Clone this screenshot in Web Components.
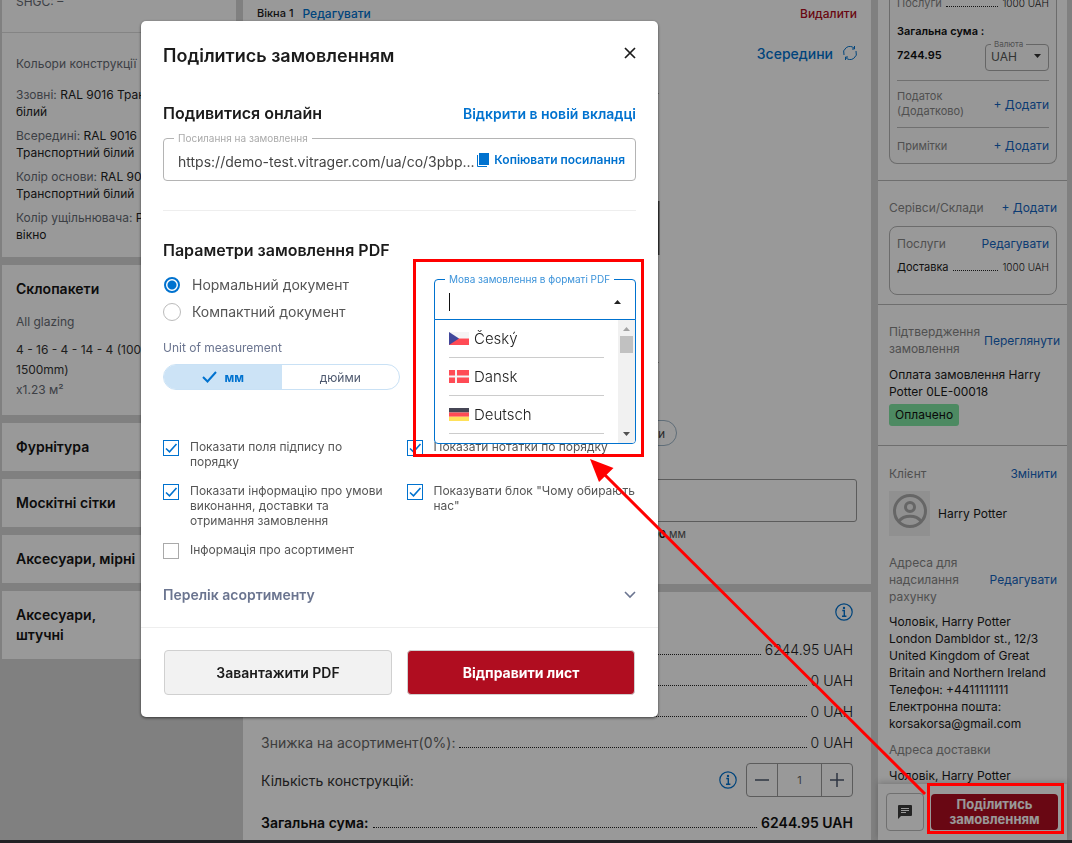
<!DOCTYPE html>
<html lang="uk">
<head>
<meta charset="utf-8">
<title>Замовлення</title>
<style>
html,body{margin:0;height:100%}
body{font-family:Inter,"Noto Sans",sans-serif;font-size:12px;color:#1c1c1c;background:#d5d5d5;overflow:hidden}
</style>
</head>
<body>
<order-page></order-page>
<script>
function define(name, html, setup) {
  const t = document.createElement('template');
  t.innerHTML = '<style>:host{display:block}*{box-sizing:border-box}a{text-decoration:none;color:var(--link,#0072cf)}button,input,select{font:inherit;color:inherit}</style>' + html;
  customElements.define(name, class extends HTMLElement {
    constructor() {
      super();
      this.attachShadow({ mode: 'open' }).appendChild(t.content.cloneNode(true));
    }
    connectedCallback() { if (setup) setup(this, this.shadowRoot); }
  });
}

/* ---------- small pieces ---------- */
define('info-icon', `
<style>:host{width:18px;height:18px}svg{display:block}</style>
<svg width="18" height="18" viewBox="0 0 18 18" fill="none" stroke="#0072cf"><circle cx="9" cy="9" r="8.2" stroke-width="1.2"/><path d="M7.3 7.5h2v5.6M7 13.3h4.4" stroke-width="1.4"/><circle cx="9" cy="4.9" r="1.2" fill="#0072cf" stroke="none"/></svg>`);

define('dotted-row', `
<style>
:host{display:flex;align-items:baseline;gap:4px}
i{flex:1;border-bottom:1px dotted #222;min-width:8px}
</style><slot name="label"></slot><i></i><slot></slot>`);

define('side-card', `
<style>:host{background:#fff;padding:14px}h3{margin:0;font-size:14px;line-height:20px;font-weight:600;color:#151515}</style>
<h3><slot name="title"></slot></h3><slot></slot>`);

define('spec-item', `
<style>:host{line-height:17px;margin-bottom:7px;font-size:12px;white-space:nowrap;color:#222}span{color:#666b74}</style>
<span><slot name="name"></slot></span> <slot></slot>`);

define('add-link', `
<style>a{font-size:12px;line-height:17px;white-space:nowrap}</style><a href="#"><slot></slot></a>`);

define('radio-option', `
<style>
label{display:flex;align-items:center;gap:11px;height:27px;font-size:14px;color:#555}
input{appearance:none;margin:0;width:18px;height:18px;border:1px solid #bbb;border-radius:50%}
input:checked{width:16px;height:16px;margin:1px;border:2px solid #0072cf;background:radial-gradient(#0072cf 4px,#fff 5px)}
</style>
<label><input type="radio"><span><slot></slot></span></label>`, (el, r) => {
  r.querySelector('input').checked = el.hasAttribute('checked');
});

define('check-option', `
<style>
label{display:flex;align-items:flex-start;gap:11px;font-size:12px;line-height:15px;color:#555;white-space:nowrap}
input{appearance:none;flex:none;margin:1px 0 -2px;width:16px;height:16px;border:1px solid #aaa;background:#fff}
input:checked{border:1px solid #0072cf;background:url('data:image/svg+xml,<svg xmlns="http://www.w3.org/2000/svg" viewBox="0 0 14 14"><path d="M2 7.5l3.5 3.3L12.5 3" fill="none" stroke="%230072cf" stroke-width="1.6"/></svg>')}
</style>
<label><input type="checkbox"><span><slot></slot></span></label>`, (el, r) => {
  r.querySelector('input').checked = el.hasAttribute('checked');
});

/* ---------- left column ---------- */
define('spec-column', `
<style>
:host{display:flex;flex-direction:column;gap:8px;min-width:0}
.first{background:#fff;height:257px;overflow:hidden}
.shgc{display:flow-root;height:33px;border-bottom:1px solid #ddd;padding-left:14px;color:#666b74;line-height:17px}
.shgc span{display:block;margin-top:-7px}
.colors{padding:22px 14px}
.colors p{margin:0 0 13px;line-height:18px;color:#666b74}
.glass{padding-bottom:1px}
.glass p{margin:13px 0 8px;line-height:20px;color:#666b74}
.glass div{line-height:20px;color:#333}
.glass div span{color:#666b74}
</style>
<section class="first">
  <div class="shgc"><span>SHGC: –</span></div>
  <div class="colors">
    <p>Кольори конструкції</p>
    <spec-item><span slot="name">Ззовні:</span>RAL 9016 Транспортний<br>білий</spec-item>
    <spec-item><span slot="name">Всередині:</span>RAL 9016<br>Транспортний білий</spec-item>
    <spec-item><span slot="name">Колір основи:</span>RAL 9016<br>Транспортний білий</spec-item>
    <spec-item><span slot="name">Колір ущільнювача:</span>P<br>вікно</spec-item>
  </div>
</section>
<side-card><span slot="title">Склопакети</span>
  <div class="glass"><p>All glazing</p><div>4 - 16 - 4 - 14 - 4 (1000 x<br>1500mm)<br><span>x1.23 м²</span></div></div>
</side-card>
<side-card><span slot="title">Фурнітура</span></side-card>
<side-card><span slot="title">Москітні сітки</span></side-card>
<side-card><span slot="title">Аксесуари, мірні</span></side-card>
<side-card><span slot="title">Аксесуари,<br>штучні</span></side-card>`);

/* ---------- middle column ---------- */
define('construction-column', `
<style>
:host{display:flex;flex-direction:column;gap:8px;min-width:0}
.view{background:#fff;height:584px;padding:3px 14px 0;display:flex;flex-direction:column}
header{display:flex;align-items:center;gap:9px;height:20px;font-size:11px}
header b,header a{font-weight:500}
header a{font-size:12px}
header .del{margin-left:auto;color:#b00d20}
.side{display:flex;justify-content:flex-end;align-items:center;gap:10px;margin-top:20px;height:20px;font-size:14px;font-weight:500}
.side svg{display:block}
.stage{display:flex;justify-content:flex-end;margin:27px 197px 0 0;height:300px}
.pill{align-self:flex-end;margin:30px 180px 0 0;width:120px;height:26px;padding:0 11px;border:1px solid #9fb6c8;border-radius:13px;background:#fff;text-align:right;font-size:12px;color:#444}
input{display:block;width:100%;height:43px;margin-top:33px;border:1px solid #999;border-radius:3px;background:#fff}
.dim{text-align:right;margin:5px 171px 0 0;font-size:11px;line-height:15px;color:#555}
.dim b{color:#111;font-weight:600}
.sum{background:#fff;flex:1;padding:11px 18px 0;font-size:14px;color:#333}
.sum info-icon{margin-left:auto}
.sum dotted-row{height:31px;line-height:31px}
.rows{margin-top:13px}
.rows span{color:#666}
.rows b{font-weight:300;color:#222}
.qty{display:flex;align-items:center;gap:9px;height:34px;margin-top:5px}
.step{display:flex;height:34px;width:107px;border:1px solid #999;border-radius:4px}
.step button{width:30px;padding:0;border:0;background:none;display:grid;place-items:center}
.step input{flex:1;min-width:0;margin:0;height:32px;border:solid #999;border-width:0 1px;border-radius:0;text-align:center;font-size:11px;color:#666}
.sum .total{font-weight:600;color:#111;margin-top:10px}
</style>
<section class="view">
  <header><b>Вікна 1</b><a href="#">Редагувати</a><a href="#" class="del">Видалити</a></header>
  <div class="side"><a href="#">Зсередини</a>
    <svg width="14" height="14" viewBox="0 0 14 14" fill="none" stroke="#0072cf"><path d="M1 9A6.2 6.2 0 0 1 11 2.2M13 5A6.2 6.2 0 0 1 3 11.8"/><path d="M11.5 0v3H9M2.5 14v-3H5"/></svg></div>
  <div class="stage"><svg width="4" height="300" stroke="#555"><path d="M0 3.500h3M0 272.500h3" stroke="#aaa"/><path d="M2.500 111v54" stroke-width="2"/></svg></div>
  <button class="pill" type="button">и</button>
  <input aria-label="Примітка">
  <div class="dim"><b>1000</b> мм</div>
</section>
<section class="sum">
  <info-icon></info-icon>
  <div class="rows">
    <dotted-row><b>6244.95 UAH</b></dotted-row>
    <dotted-row><b>0 UAH</b></dotted-row>
    <dotted-row><b>0 UAH</b></dotted-row>
    <dotted-row><span slot="label">Знижка на асортимент(0%):</span><b>0 UAH</b></dotted-row>
  </div>
  <div class="qty"><label for="q">Кількість конструкцій:</label><info-icon></info-icon>
    <div class="step"><button type="button" aria-label="Менше"><svg width="16" height="16" stroke="#4d586e" stroke-width="1.500"><path d="M1 8h14"/></svg></button><input id="q" value="1"><button type="button" aria-label="Більше"><svg width="16" height="16" stroke="#4d586e" stroke-width="1.500"><path d="M1 8h14M8 1v14"/></svg></button></div>
  </div>
  <dotted-row class="total"><span slot="label">Загальна сума:</span><span>6244.95 UAH</span></dotted-row>
</section>`);

/* ---------- right column ---------- */
define('order-column', `
<style>
:host{display:flex;flex-direction:column;background:#fff;min-width:0;font-size:12px;line-height:17px;--link:#1565c0}
.scroll{flex:1;min-height:0;overflow:hidden}
section{padding:0 10px 0 11px;border-bottom:1px solid #b8b8b8}
section:last-child{border:0}
.box{border:1px solid #b4b4b4;border-radius:8px;padding:0 7px}
.split{display:flex;justify-content:space-between;align-items:center}
.g{color:#858585}
.one{height:181px}
.one .box{display:flow-root;border-top:0;border-radius:0 0 8px 8px;height:164px;background:#fcfcfc}
.one dotted-row,.two dotted-row{font-size:11px}
.one dotted-row{margin-top:-5px;height:17px}
.p{font-size:10px;font-weight:300;color:#222}
.one .strong{font-size:11px;font-weight:600;color:#111}
.one .head{margin-top:11px}
.cur{display:flex;justify-content:space-between;align-items:center;height:41px;border-bottom:1px solid #bbb;padding-bottom:9px}
fieldset{margin:0;padding:0 5px;border:1px solid #aaa;border-radius:4px;width:64px;height:31px}
legend{font-size:8px;line-height:8px;padding:0 3px;margin:0;color:#888}
select{appearance:none;border:0;width:100%;height:17px;padding:0;color:#555;font-size:12px;background:none}
.sel{position:relative}
.sel svg{position:absolute;right:1px;top:6px}
.tax{height:47px;border-bottom:1px solid #bbb;font-size:11px;line-height:15px}
.notes{height:36px;font-size:11px}
.two{height:124px;padding-top:18px}
.two .box{height:69px;margin-top:10px;padding-top:8px}
.two dotted-row{margin-top:7px}
.three{height:141px;padding-top:18px}
.three a{margin-right:-3px}
.three p{margin:9px 0 4px;color:#1a1a1a}
.badge{display:inline-block;background:#80e6a3;border-radius:3px;padding:0 6px;line-height:22px;color:#111}
.four{padding-top:19px}
.user{display:flex;align-items:center;gap:8px;margin:9px 0 18px;color:#1a1a1a}
.user span{width:41px;height:45px;background:#f0f0f0;display:grid;place-items:center;padding-bottom:5px}
.addr{color:#1a1a1a;margin-top:8px;white-space:nowrap}
.ship{margin-top:9px}
footer{display:flex;gap:7px;padding:9px 9px 9px 8px;height:56px;box-shadow:0 -2px 6px #0003;background:#fff}
footer button{border-radius:4px;padding:0;display:grid;place-items:center}
.chat{width:38px;border:1px solid #bbb;background:#fff}
.share{flex:1;margin:1px 0;border:0;background:#b00d20;color:#fff;font-size:13px;font-weight:700;line-height:15px}
</style>
<div class="scroll">
  <section class="one"><div class="box">
    <dotted-row><span slot="label" class="g">Послуги</span><span class="p">1000 UAH</span></dotted-row>
    <div class="strong head">Загальна сума :</div>
    <div class="cur"><span class="strong">7244.95</span>
      <fieldset><legend>Валюта</legend><div class="sel"><select aria-label="Валюта"><option>UAH</option></select><svg width="8" height="5"><path d="M0 0h7l-3.500 4z" fill="#333"/></svg></div></fieldset></div>
    <div class="split tax"><span class="g">Податок<br>(Додатково)</span><add-link>+ Додати</add-link></div>
    <div class="split notes"><span class="g">Примітки</span><add-link>+ Додати</add-link></div>
  </div></section>
  <section class="two">
    <div class="split"><span class="g">Серівси/Склади</span><add-link>+ Додати</add-link></div>
    <div class="box"><div class="split"><span class="g">Послуги</span><a href="#">Редагувати</a></div>
      <dotted-row><span slot="label">Доставка</span><span class="p">1000 UAH</span></dotted-row></div>
  </section>
  <section class="three">
    <div class="split"><span class="g">Підтвердження<br>замовлення</span><a href="#">Переглянути</a></div>
    <p>Оплата замовлення Harry<br>Potter 0LE-00018</p><span class="badge">Оплачено</span>
  </section>
  <section class="four">
    <div class="split"><span class="g">Клієнт</span><a href="#">Змінити</a></div>
    <div class="user"><span><svg width="34" height="34" viewBox="0 0 34 34" fill="none" stroke="#aaa" stroke-width="3"><circle cx="17" cy="17" r="15.500"/><circle cx="17" cy="13" r="4.500"/><path d="M6 27c5-6.500 17-6.500 22 0"/></svg></span>Harry Potter</div>
    <div class="split"><span class="g">Адреса для<br>надсилання<br>рахунку</span><a href="#">Редагувати</a></div>
    <div class="addr">Чоловік, Harry Potter<br>London Dambldor st., 12/3<br>United Kingdom of Great<br>Britain and Northern Ireland<br>Телефон: +4411111111<br>Електронна пошта:<br>korsakorsa@gmail.com</div>
    <div class="g ship">Адреса доставки</div>
    <div class="addr ship">Чоловік, Harry Potter</div>
  </section>
</div>
<footer>
  <button class="chat" type="button" aria-label="Чат"><svg width="14" height="14" viewBox="0 0 14 14"><path d="M1 0h12q1 0 1 1v9q0 1-1 1H3l-3 3V1q0-1 1-1z" fill="#3c3c3c"/><path d="M3 3.500h8M3 5.500h8M3 7.500h5" stroke="#fff"/></svg></button>
  <button class="share" type="button">Поділитись<br>замовленням</button>
</footer>`);

/* ---------- language combo box ---------- */
define('language-option', `
<style>
:host{display:flex;align-items:center;gap:5px;height:38px;border-bottom:1px solid #ccc;font-size:15px;font-weight:300;color:#222}
svg{display:block}
</style><svg width="20" height="13" viewBox="0 0 20 13"></svg><span><slot></slot></span>`, (el, r) => {
  const flags = {
    cs: '<path fill="#f5f5f5" d="M0 0h20v6.500H0z"/><path fill="#ff4b55" d="M0 6.500h20V13H0z"/><path fill="#41479b" d="M0 0l10 6.500L0 13z"/>',
    da: '<path fill="#ff4b55" d="M0 0h20v13H0z"/><path fill="#f5f5f5" d="M6 0h2v13H6zM0 5.500h20v2H0z"/>',
    de: '<path fill="#464655" d="M0 0h20v4.400H0z"/><path fill="#ff4b55" d="M0 4.400h20v4.300H0z"/><path fill="#ffe15a" d="M0 8.700h20V13H0z"/>'
  };
  r.querySelector('svg').innerHTML = flags[el.getAttribute('flag')];
});

define('language-combo', `
<style>
:host{position:relative}
fieldset{margin:0;min-width:0;padding:0 13px 0 14px;border:1px solid #0072cf;border-radius:4px 4px 0 0;height:46px;display:flex;align-items:center}
legend{margin-left:-4px;padding:0 4px;font-size:10px;line-height:10px;color:#3c93da;white-space:nowrap}
input{flex:1;width:0;min-width:0;border:0;outline:0;padding:0;height:22px;font-size:15px;background:linear-gradient(#111,#111) 0 50%/1px 18px no-repeat}
.list{position:absolute;z-index:2;left:0;right:0;top:45px;height:125px;border:1px solid #0072cf;border-radius:0 0 4px 4px;background:#fff;display:flex;overflow:hidden}
.opts{flex:1;padding:0 14px}
.bar{width:17px;background:#f1f1f1;display:flex;flex-direction:column;align-items:center;justify-content:space-between;padding:7px 0}
.thumb{width:13px;height:17px;background:#c1c1c1;margin:5px 0 auto}
svg{display:block;flex:none}
</style>
<fieldset><legend>Мова замовлення в форматі PDF</legend><input role="combobox" aria-expanded="true" aria-label="Мова замовлення в форматі PDF"><svg width="8" height="4"><path d="M0 4h7L3.500 0z" fill="#222"/></svg></fieldset>
<div class="list"><div class="opts" role="listbox">
  <language-option role="option" flag="cs">Český</language-option>
  <language-option role="option" flag="da">Dansk</language-option>
  <language-option role="option" flag="de">Deutsch</language-option>
</div><div class="bar"><svg width="8" height="4"><path d="M0 4h7L3.500 0z" fill="#a3a3a3"/></svg><div class="thumb"></div><svg width="8" height="4"><path d="M0 0h7L3.500 4z" fill="#505050"/></svg></div></div>`);

/* ---------- dialog ---------- */
define('share-dialog', `
<style>
:host{background:#fff;border-radius:5px;box-shadow:0 1px 3px #0009;color:#1b1b1b}
.body{padding:20px 22px 0}
.line{display:flex;justify-content:space-between;align-items:center}
h2,h3{margin:0;font-weight:600}
h2{font-size:18px;line-height:24px}
h3{font-size:16px;line-height:20px}
.x{border:0;background:none;padding:0;width:13px;height:24px;margin-bottom:5px}
.x svg,.chev{display:block}
.online{margin-top:33px}
.online a{font-size:14px;font-weight:600}
.link{margin:10px 0 0;padding:0 10px 0 14px;border:1px solid #b4b4b4;border-radius:4px;height:48px;display:flex;align-items:center}
.link legend{margin-left:-4px;padding:0 4px;font-size:10px;line-height:10px;color:#aaa}
.link input{flex:1;min-width:0;border:0;padding:0;font-size:14px;color:#444;background:none;text-overflow:ellipsis;height:20px}
.link button{border:0;background:none;padding:0;margin-bottom:4px;display:flex;align-items:center;gap:5px;font-size:12px;font-weight:600;color:#0072cf}
hr{border:0;border-top:1px solid #eee;margin:29px 0}
.params{display:flex;justify-content:space-between;align-items:flex-start;margin-top:11px}
.left{width:237px}
language-combo{width:202px;margin-top:3px}
.unit{margin:14px 0 7px;font-size:12px;line-height:18px;color:#6b7590}
.toggle{display:flex;height:26px;border:1px solid #c9e1f5;border-radius:13px;overflow:hidden}
.toggle button{flex:1;border:0;background:none;padding:0;font-size:12px;color:#4d586e}
.toggle .on{background:#cce3f6;color:#0072cf;font-weight:700;display:flex;align-items:center;justify-content:center;gap:8px}
.checks{display:grid;grid-template-columns:repeat(2,minmax(0,1fr));gap:14px;margin-top:49px}
.more{display:flex;width:100%;justify-content:space-between;align-items:center;border:0;background:none;padding:0;margin:28px 0 22px;font-size:14px;font-weight:600;line-height:20px;color:#6b7590}
footer{display:flex;gap:15px;padding:22px 23px;border-top:1px solid #eee}
footer button{flex:1;height:45px;border:1px solid #d0d0d0;border-radius:4px;background:#f2f2f2;font-size:14px;font-weight:600}
footer .red{background:#b00d20;color:#fff;font-weight:700}
</style>
<div class="body">
  <div class="line"><h2>Поділитись замовленням</h2><button class="x" type="button" aria-label="Закрити"><svg width="13" height="24" stroke="#1b1b1b" stroke-width="1.700"><path d="M2 7l10 10M12 7L2 17"/></svg></button></div>
  <div class="line online"><h3>Подивитися онлайн</h3><a href="#">Відкрити в новій вкладці</a></div>
  <fieldset class="link"><legend>Посилання на замовлення</legend>
    <input readonly aria-label="Посилання на замовлення" value="https://demo-test.vitrager.com/ua/co/3pbp...">
    <button type="button"><svg width="12" height="14"><path d="M2 0h10v12H2z" fill="#0072cf"/><path d="M.5 2v11.500H10" fill="none" stroke="#0072cf"/></svg>Копіювати посилання</button>
  </fieldset>
  <hr>
  <h3>Параметри замовлення PDF</h3>
  <div class="params">
    <div class="left">
      <radio-option checked>Нормальний документ</radio-option>
      <radio-option>Компактний документ</radio-option>
      <div class="unit">Unit of measurement</div>
      <div class="toggle"><button class="on" type="button"><svg width="15" height="12" fill="none" stroke="#0072cf" stroke-width="2"><path d="M1 6l4.500 4.500L14 1"/></svg>мм</button><button type="button">дюйми</button></div>
    </div>
    <language-combo></language-combo>
  </div>
  <div class="checks">
    <check-option checked>Показати поля підпису по<br>порядку</check-option>
    <check-option checked>Показати нотатки по порядку</check-option>
    <check-option checked>Показати інформацію про умови<br>виконання, доставки та<br>отримання замовлення</check-option>
    <check-option checked>Показувати блок "Чому обирають<br>нас"</check-option>
    <check-option>Інформація про асортимент</check-option>
  </div>
  <button class="more" type="button">Перелік асортименту<svg class="chev" width="12" height="8" fill="none" stroke="#6b7590" stroke-width="1.600"><path d="M1 1l5 5 5-5"/></svg></button>
</div>
<footer><button type="button">Завантажити PDF</button><button type="button" class="red">Відправити лист</button></footer>`);

/* ---------- red marks drawn over the page ---------- */
define('callout-layer', `
<style>:host{position:fixed;inset:0;z-index:5;pointer-events:none}</style>
<svg width="1072" height="843" fill="none" stroke="#f00" stroke-width="3"><path d="M414.500 260.500h228v195h-228zM928.500 784.500h134v48h-134z"/><path d="M925 794L603 473"/><path d="M590 459l23.500 9-14.500 14z" fill="#f00" stroke="none"/></svg>`);

define('order-page', `
<style>
:host{display:flex;flex-direction:column;height:100vh}
main{flex:1;min-height:0;display:grid;grid-template-columns:234px minmax(0,1fr) 189px;gap:7px;padding:0 5px 0 2px;overflow:hidden}
.strip{height:3px;background:#3a3a3e}
.backdrop{position:fixed;inset:0;z-index:3;background:#0006;padding:21px 0 0 141px}
share-dialog{max-width:517px}
</style>
<main><spec-column></spec-column><construction-column></construction-column><order-column></order-column></main>
<div class="strip"></div>
<div class="backdrop"><share-dialog></share-dialog></div>
<callout-layer></callout-layer>`);
</script>
</body>
</html>
